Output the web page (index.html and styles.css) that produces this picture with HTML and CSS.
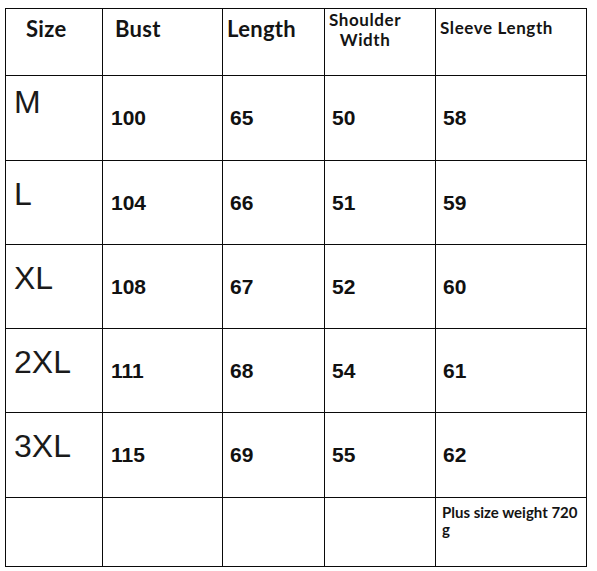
FILE: index.html
```html
<!DOCTYPE html>
<html lang="en">
<head>
<meta charset="utf-8">
<title>Size chart</title>
<link rel="stylesheet" href="styles.css">
</head>
<body>
<div class="chart">
  <div class="cell hd hd-size">Size</div>
  <div class="cell hd hd-bust">Bust</div>
  <div class="cell hd hd-len">Length</div>
  <div class="cell hd hd-sh"><span class="two">Shoulder<br>Width</span></div>
  <div class="cell hd hd-sl">Sleeve Length</div>

  <div class="cell sz sz-first">M</div>
  <div class="cell num num-first">100</div>
  <div class="cell num">65</div>
  <div class="cell num">50</div>
  <div class="cell num">58</div>

  <div class="cell sz">L</div>
  <div class="cell num num-first">104</div>
  <div class="cell num">66</div>
  <div class="cell num">51</div>
  <div class="cell num">59</div>

  <div class="cell sz">XL</div>
  <div class="cell num num-first">108</div>
  <div class="cell num">67</div>
  <div class="cell num">52</div>
  <div class="cell num">60</div>

  <div class="cell sz">2XL</div>
  <div class="cell num num-first">111</div>
  <div class="cell num">68</div>
  <div class="cell num">54</div>
  <div class="cell num">61</div>

  <div class="cell sz">3XL</div>
  <div class="cell num num-first">115</div>
  <div class="cell num">69</div>
  <div class="cell num">55</div>
  <div class="cell num">62</div>

  <div class="cell"></div>
  <div class="cell"></div>
  <div class="cell"></div>
  <div class="cell"></div>
  <div class="cell note">Plus size weight 720<br>g</div>
</div>
</body>
</html>
```

FILE: styles.css
```css
html, body {
  margin: 0;
  padding: 0;
  background: #ffffff;
}

body {
  padding: 8px 0 0 5px;
  color: #141414;
}

.chart {
  display: grid;
  grid-template-columns: 96px 119px 101px 110px 150px;
  grid-template-rows: 66px 84px 83px 83px 83px 84px 68px;
  gap: 1px;
  width: fit-content;
  background: #0a0a0a;
  border: 1px solid #0a0a0a;
}

.cell {
  background: #ffffff;
  box-sizing: border-box;
}

.hd {
  font-family: Lato, "Open Sans", sans-serif;
  font-weight: 700;
  font-size: 22px;
  line-height: 24px;
  letter-spacing: 0.3px;
  padding-top: 8px;
}

.hd-size { padding-left: 20px; }
.hd-bust { padding-left: 12px; }
.hd-len  { padding-left: 4px; }

.hd-sh {
  font-size: 17px;
  line-height: 20px;
  letter-spacing: 0.6px;
  padding-top: 1px;
  padding-left: 4px;
}

.two {
  display: inline-block;
  text-align: center;
}

.hd-sl {
  font-size: 17px;
  line-height: 20px;
  letter-spacing: 0.6px;
  padding-top: 9px;
  padding-left: 4px;
}

.sz {
  font-family: "Liberation Sans", Arial, sans-serif;
  font-weight: 400;
  font-size: 32px;
  line-height: 36px;
  padding-top: 15px;
  padding-left: 8px;
  color: #1a1a1a;
}

.sz-first { padding-top: 8px; }

.num {
  font-family: "Liberation Sans", Arial, sans-serif;
  font-weight: 700;
  font-size: 21px;
  line-height: 24px;
  padding-top: 30px;
  padding-left: 7px;
  color: #111111;
}

.num-first { padding-left: 8px; }

.note {
  font-family: Lato, "Open Sans", sans-serif;
  font-weight: 700;
  font-size: 15px;
  line-height: 17px;
  padding-top: 6px;
  padding-left: 6px;
}
```
